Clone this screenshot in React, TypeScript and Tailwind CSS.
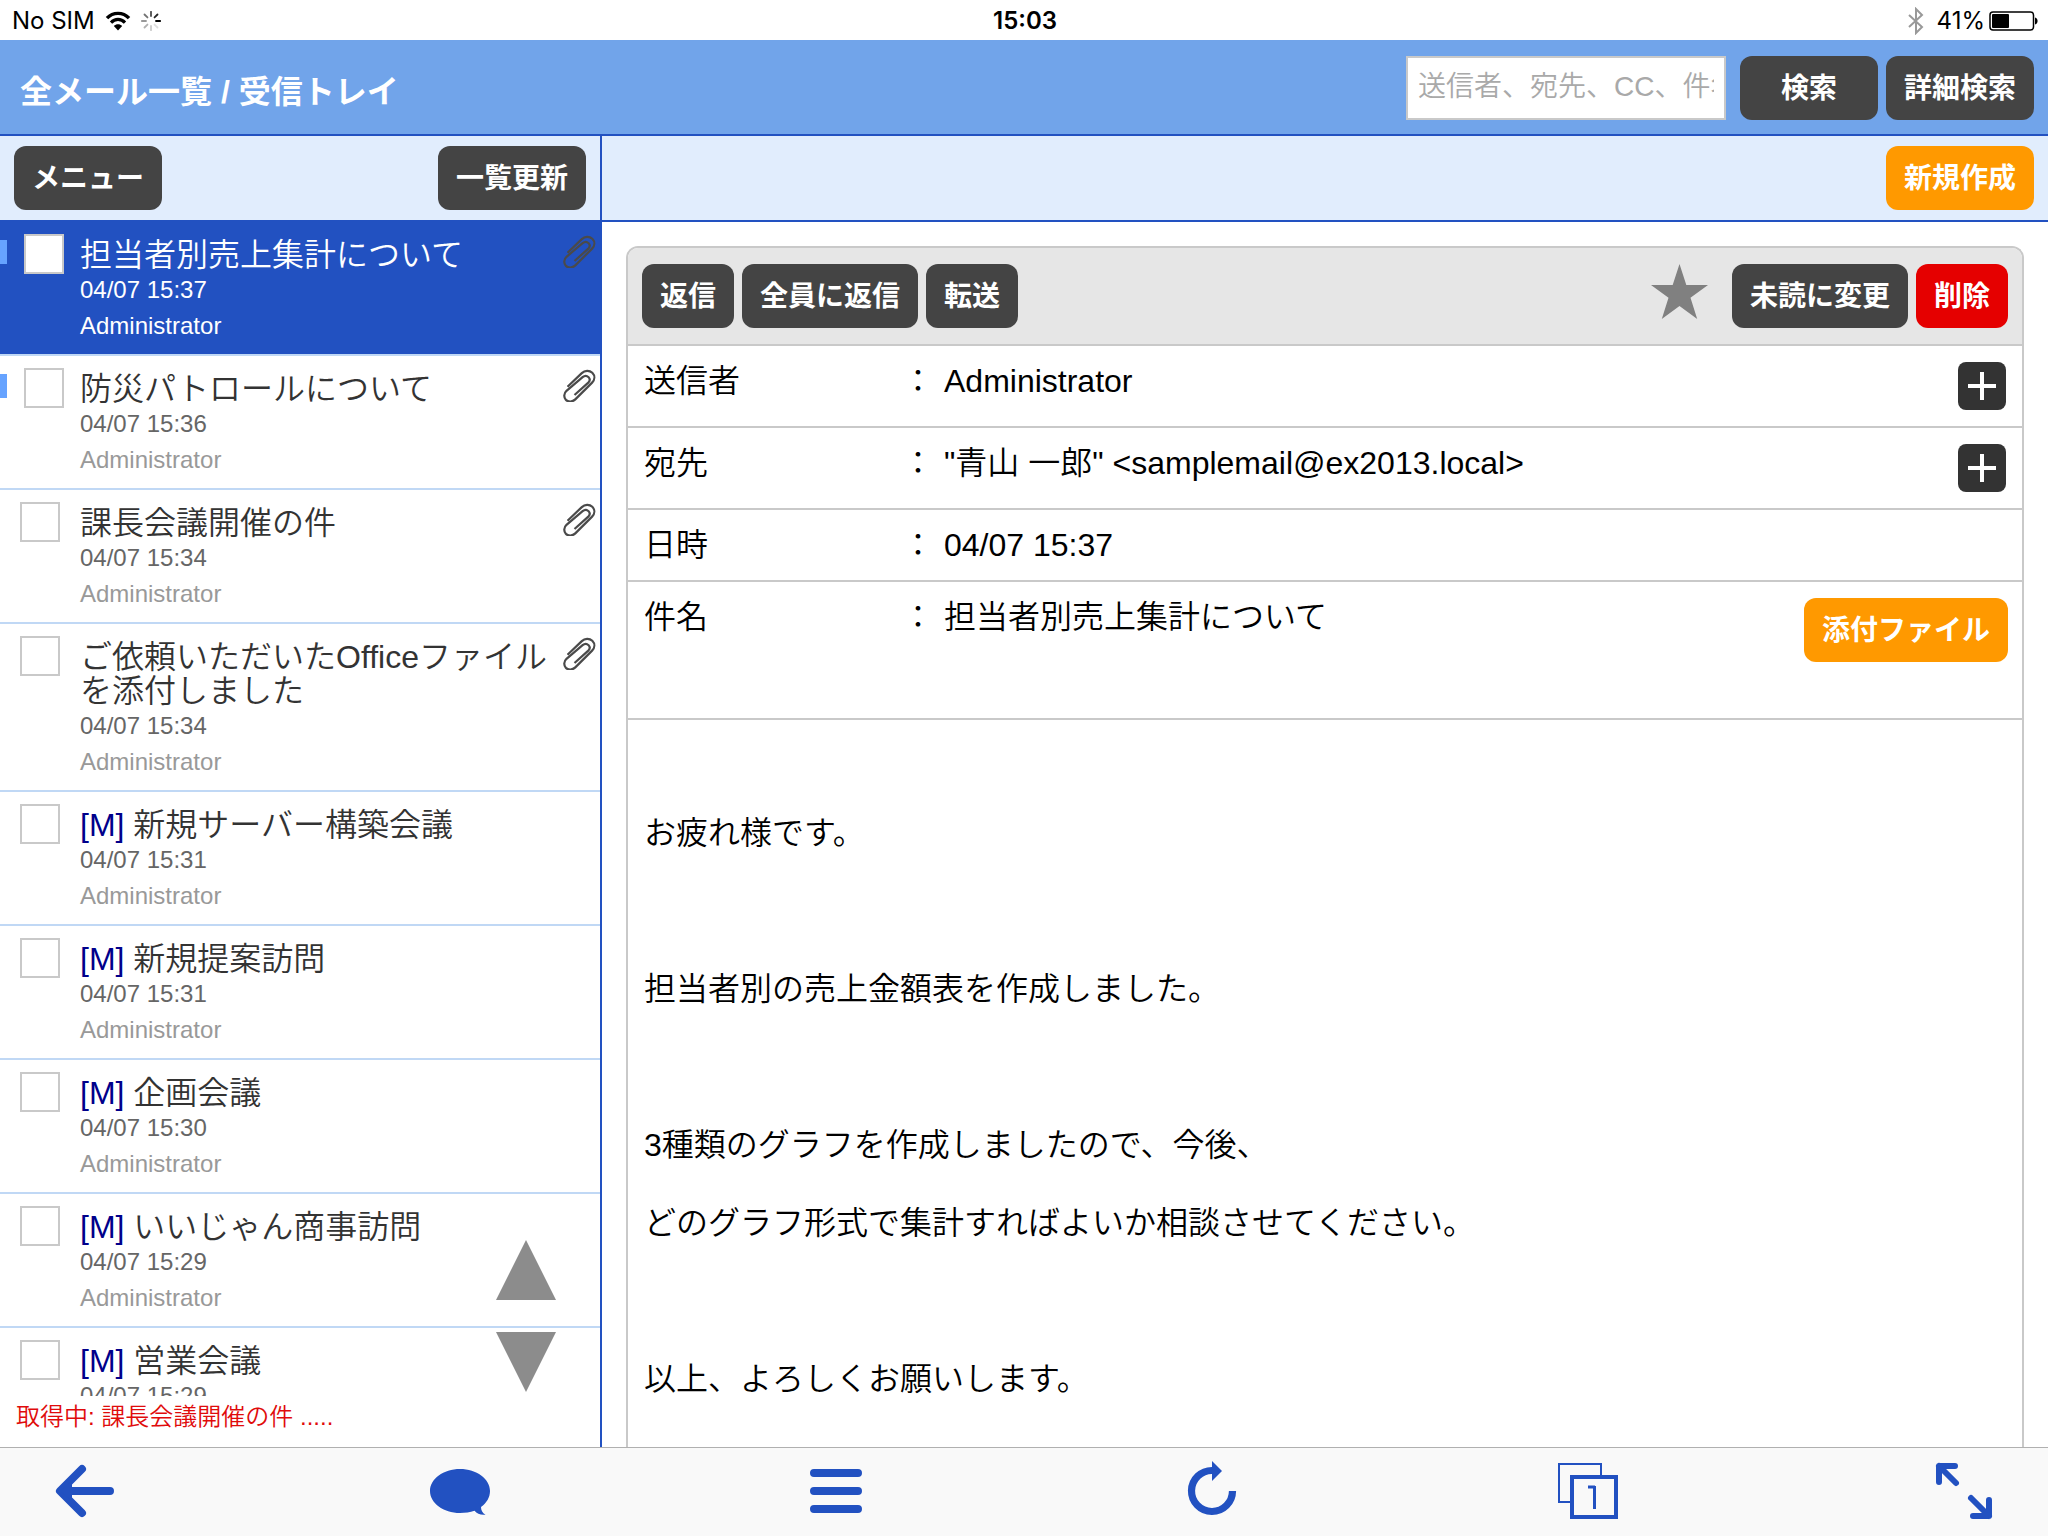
import type { ReactNode } from "react";

type Mail = {
  title: string;
  date: string;
  from: string;
  meeting?: boolean;
  unread?: boolean;
  attached?: boolean;
  selected?: boolean;
};

const mails: Mail[] = [
  { title: "担当者別売上集計について", date: "04/07 15:37", from: "Administrator", unread: true, attached: true, selected: true },
  { title: "防災パトロールについて", date: "04/07 15:36", from: "Administrator", unread: true, attached: true },
  { title: "課長会議開催の件", date: "04/07 15:34", from: "Administrator", attached: true },
  { title: "ご依頼いただいたOfficeファイルを添付しました", date: "04/07 15:34", from: "Administrator", attached: true },
  { title: "新規サーバー構築会議", date: "04/07 15:31", from: "Administrator", meeting: true },
  { title: "新規提案訪問", date: "04/07 15:31", from: "Administrator", meeting: true },
  { title: "企画会議", date: "04/07 15:30", from: "Administrator", meeting: true },
  { title: "いいじゃん商事訪問", date: "04/07 15:29", from: "Administrator", meeting: true },
  { title: "営業会議", date: "04/07 15:29", from: "Administrator", meeting: true },
];

const bodyLines = [
  "お疲れ様です。",
  "",
  "担当者別の売上金額表を作成しました。",
  "",
  "3種類のグラフを作成しましたので、今後、",
  "どのグラフ形式で集計すればよいか相談させてください。",
  "",
  "以上、よろしくお願いします。",
];

const tones = {
  dark: "bg-[#444444]",
  orange: "bg-[#ff9900]",
  red: "bg-[#e50000]",
};

function Button({ children, tone = "dark", wide = false }: { children: ReactNode; tone?: keyof typeof tones; wide?: boolean }) {
  return (
    <button
      type="button"
      className={`h-16 shrink-0 rounded-xl pt-0.5 text-[28px] leading-10 font-bold whitespace-nowrap text-white ${wide ? "px-[41px]" : "px-[18px]"} ${tones[tone]}`}
    >
      {children}
    </button>
  );
}

function StatusBar() {
  const rays = [1, 0.85, 0.7, 0.55, 0.4, 0.3, 0.2, 0.12].map((o, i) => ({ o, a: i * 45 }));
  return (
    <div className="grid h-10 shrink-0 grid-cols-3 items-center bg-white pt-0.5 pr-2.5 pl-3 font-['Inter','Liberation_Sans',sans-serif] text-2xl leading-[38px] text-black">
      <div className="flex items-center gap-2.5">
        <span>No SIM</span>
        <svg width="26" height="20" viewBox="0 0 26 20" fill="none" aria-hidden="true">
          <path d="M2 7.2C8 .8 18 .8 24 7.2" stroke="#000" strokeWidth="3.4" />
          <path d="M6 11.6c4-4.2 10-4.2 14 0" stroke="#000" strokeWidth="3.2" />
          <path d="M13 19.5l-4.2-4.6c2.4-2.2 6-2.2 8.4 0z" fill="#000" />
        </svg>
        <svg width="20" height="20" viewBox="-10 -10 20 20" aria-hidden="true">
          {rays.map(({ o, a }) => (
            <line key={a} x1="5" y1="0" x2="9.2" y2="0" stroke="#000" strokeWidth="1.8" strokeLinecap="round" opacity={o} transform={`rotate(${-a})`} />
          ))}
        </svg>
      </div>
      <div className="text-center font-semibold">15:03</div>
      <div className="flex items-center justify-end">
        <svg className="mr-3" width="18" height="28" viewBox="0 0 18 28" fill="none" stroke="#999999" strokeWidth="2" aria-hidden="true">
          <path d="M2 8l13 12-6 6V2l6 6L2 20" />
        </svg>
        <span className="mr-1">41%</span>
        <svg width="49" height="20" viewBox="0 0 49 20" aria-hidden="true">
          <rect x="1" y="1" width="43.5" height="18" rx="3" fill="none" stroke="#000" strokeWidth="1.5" />
          <rect x="3" y="3" width="17" height="14" rx="1" fill="#000" />
          <path d="M46 6.5c3.4.8 3.4 6.2 0 7z" fill="#000" />
        </svg>
      </div>
    </div>
  );
}

function Paperclip() {
  return (
    <svg className="mt-[13px] shrink-0" width="33" height="33" viewBox="0 0 33 33" fill="none" stroke="#4a4a4a" strokeWidth="2.2" role="img" aria-label="添付あり">
      <path d="M4.5 17.8L18.8 4.1C21.8 1.2 26.4 1 29.3 3.8c2.8 2.9 2.6 7-.2 9.8L12.3 30.400c-2.900 2.800-7.200 2.800-9.500.3C.5 28.200.9 24.300 3.500 21.800L19.600 8.200c2-1.700 4.400-1.600 6 0 1.600 1.700 1.300 3.800-.3 5.400L11.500 26" />
    </svg>
  );
}

function MailRow({ mail, id }: { mail: Mail; id: string }) {
  return (
    <li className={`relative flex items-start border-b-2 border-[#c0d8f5] pr-1 ${mail.selected ? "bg-[#2251c1]" : "bg-white"}`}>
      {mail.unread && <span className="absolute top-[18px] left-0 h-6 w-[7px] bg-[#66a3ff]" />}
      <div className={`w-20 shrink-0 pt-3 ${mail.unread ? "pl-6" : "pl-5"}`}>
        <input id={id} type="checkbox" className="block size-10 appearance-none border-2 border-[#c9c9c9] bg-white" />
      </div>
      <div className="min-w-0 flex-1 pt-4 pb-2.5">
        <label htmlFor={id} className={`block max-w-[480px] text-[32px] leading-[34px] font-[350] ${mail.selected ? "text-white" : "text-[#333333]"}`}>
          {mail.meeting && <span className="text-[#00008b]">[M] </span>}
          {mail.title}
        </label>
        <div className={`text-2xl leading-9 ${mail.selected ? "text-white" : "text-[#666666]"}`}>{mail.date}</div>
        <div className={`text-2xl leading-9 ${mail.selected ? "text-white" : "text-[#999999]"}`}>{mail.from}</div>
      </div>
      {mail.attached && <Paperclip />}
    </li>
  );
}

function Sidebar() {
  return (
    <aside className="relative flex w-[602px] shrink-0 flex-col overflow-hidden border-r-2 border-[#2251c1]">
      <div className="flex shrink-0 items-center justify-between border-b-2 border-[#2251c1] bg-[#e1edfd] py-2.5 pr-3.5 pl-3.5">
        <Button>メニュー</Button>
        <Button>一覧更新</Button>
      </div>
      <ul className="min-h-0 flex-1 overflow-hidden">
        {mails.map((m, i) => (
          <MailRow key={i} mail={m} id={`mail-${i}`} />
        ))}
      </ul>
      <div className="absolute right-11 bottom-[55px] flex flex-col gap-8">
        <button type="button" aria-label="上へ">
          <svg className="block" width="60" height="60" viewBox="0 0 60 60" fill="#8c8c8c"><path d="M30 0l30 60H0z" /></svg>
        </button>
        <button type="button" aria-label="下へ">
          <svg className="block" width="60" height="60" viewBox="0 0 60 60" fill="#8c8c8c"><path d="M0 0h60L30 60z" /></svg>
        </button>
      </div>
      <div className="h-[51px] shrink-0 bg-white pl-4 text-2xl leading-[42px] font-[350] text-[#e00b0b]">
        取得中: 課長会議開催の件 .....
      </div>
    </aside>
  );
}

function Field({ label, children, action, tall = false }: { label: string; children: ReactNode; action?: ReactNode; tall?: boolean }) {
  return (
    <div className={`flex items-start border-b-2 border-[#c9c9c9] pl-4 ${tall ? "min-h-[138px]" : ""}`}>
      <dt className="flex w-[300px] shrink-0 justify-between py-[14px] pr-2.5 leading-[42px]">
        {label}
        <span>：</span>
      </dt>
      <dd className="flex min-w-0 flex-1 items-start">
        <span className="flex-1 py-[14px] leading-[42px]">{children}</span>
        {action}
      </dd>
    </div>
  );
}

function PlusButton() {
  return (
    <button type="button" aria-label="詳細を表示" className="mt-4 mr-4 mb-4 flex size-12 shrink-0 items-center justify-center rounded-lg bg-[#333333]">
      <svg width="28" height="28" viewBox="0 0 28 28" stroke="#fff" strokeWidth="4"><path d="M14 0v28M0 14h28" /></svg>
    </button>
  );
}

function Message() {
  return (
    <main className="flex min-w-0 flex-1 flex-col overflow-hidden">
      <div className="flex shrink-0 justify-end border-b-2 border-[#2251c1] bg-[#e1edfd] py-2.5 pr-3.5">
        <Button tone="orange">新規作成</Button>
      </div>
      <div className="flex min-h-0 flex-1 flex-col overflow-hidden px-6 pt-6">
        <article className="flex-1 rounded-t-xl border-2 border-b-0 border-[#c9c9c9] bg-white text-[32px] font-[350] text-black">
          <div className="flex items-start justify-between rounded-t-[10px] border-b-2 border-[#c9c9c9] bg-[#e6e6e6] px-3.5 py-4">
            <div className="flex gap-2">
              <Button>返信</Button>
              <Button>全員に返信</Button>
              <Button>転送</Button>
            </div>
            <div className="flex items-start gap-2">
              <button type="button" aria-label="スター" className="mr-4">
                <svg className="block" width="57" height="55" viewBox="0 0 56 54" fill="#808080">
                  <path d="M28 0l6.700 20.500H56L38.800 33.200 45.400 54 28 41.200 10.600 54l6.600-20.800L0 20.500h21.300z" />
                </svg>
              </button>
              <Button>未読に変更</Button>
              <Button tone="red">削除</Button>
            </div>
          </div>
          <dl>
            <Field label="送信者" action={<PlusButton />}>Administrator</Field>
            <Field label="宛先" action={<PlusButton />}>{'"青山 一郎" <samplemail@ex2013.local>'}</Field>
            <Field label="日時">04/07 15:37</Field>
            <Field
              label="件名"
              tall
              action={
                <div className="mt-4 mr-3.5">
                  <Button tone="orange">添付ファイル</Button>
                </div>
              }
            >
              担当者別売上集計について
            </Field>
          </dl>
          <div className="px-4 pt-[74px] leading-[78px]">
            {bodyLines.map((line, i) => (
              <p key={i} className="min-h-[78px]">{line}</p>
            ))}
          </div>
        </article>
      </div>
    </main>
  );
}

function NavButton({ label, children }: { label: string; children: ReactNode }) {
  return (
    <button type="button" aria-label={label} className="flex size-14 items-center justify-center">
      <svg className="overflow-visible" width="56" height="56" viewBox="0 0 56 56" fill="none">
        {children}
      </svg>
    </button>
  );
}

function BottomBar() {
  return (
    <nav className="flex shrink-0 items-center justify-between border-t border-[#b0b0b0] bg-[#f9f9f9] px-14 pt-[15px] pb-[17px]">
      <NavButton label="戻る">
        <path d="M26 6L4 28l22 22M6 28h48" stroke="#2251c1" strokeWidth="8" strokeLinecap="round" strokeLinejoin="round" />
        <path d="M4 28l12-10v20z" fill="#2251c1" />
      </NavButton>
      <NavButton label="コメント">
        <path d="M28 6c16.600 0 30 9.800 30 22 0 6.400-3.400 12-9 16 0 3.200 1.200 5.800 4.500 7.700-4.500.6-8.500-.8-11-3.900-4.400 1.500-9.300 2.200-14.500 2.200C11.400 50-2 40.200-2 28S11.400 6 28 6z" fill="#2251c1" />
      </NavButton>
      <NavButton label="メニュー">
        <path d="M6 10h44M6 28h44M6 46h44" stroke="#2251c1" strokeWidth="8" strokeLinecap="round" />
      </NavButton>
      <NavButton label="再読み込み">
        <path d="M28.500 7.500A20.500 20.500 0 1 0 48.500 28" stroke="#2251c1" strokeWidth="7.200" />
        <path d="M28 -2l10 10-10 10z" fill="#2251c1" />
      </NavButton>
      <NavButton label="ページ一覧">
        <rect x="-1" y="1" width="42" height="38" stroke="#2251c1" strokeWidth="2" />
        <rect x="12" y="14" width="44" height="40" fill="#f9f9f9" stroke="#2251c1" strokeWidth="4" />
        <path d="M28 24h7M34.500 23v23" stroke="#2251c1" strokeWidth="3" />
      </NavButton>
      <NavButton label="全画面">
        <path d="M19 3H3v16M3 3l17 17M53 37v16H37M53 53L35 35" stroke="#2251c1" strokeWidth="6" strokeLinecap="round" strokeLinejoin="round" />
      </NavButton>
    </nav>
  );
}

export default function App() {
  return (
    <div lang="ja" className="flex h-screen flex-col overflow-hidden bg-white font-['Liberation_Sans','Noto_Sans_CJK_JP',sans-serif]">
      <StatusBar />
      <header className="flex h-24 shrink-0 items-start justify-between border-b-2 border-[#2251c1] bg-[#71a4ea] pt-4 pr-3.5 pl-5">
        <h1 className="pt-3 text-[32px] leading-[48px] font-bold text-white">全メール一覧 / 受信トレイ</h1>
        <form className="flex items-center gap-2" onSubmit={(e) => e.preventDefault()}>
          <input
            type="text"
            aria-label="メール検索"
            placeholder="送信者、宛先、CC、件名"
            className="mr-1.5 h-16 w-80 border-2 border-[#c9c9c9] bg-white px-2.5 pb-0.5 text-[28px] font-[350] text-black placeholder:text-[#a9a9a9]"
          />
          <Button wide>検索</Button>
          <Button>詳細検索</Button>
        </form>
      </header>
      <div className="flex min-h-0 flex-1">
        <Sidebar />
        <Message />
      </div>
      <BottomBar />
    </div>
  );
}
